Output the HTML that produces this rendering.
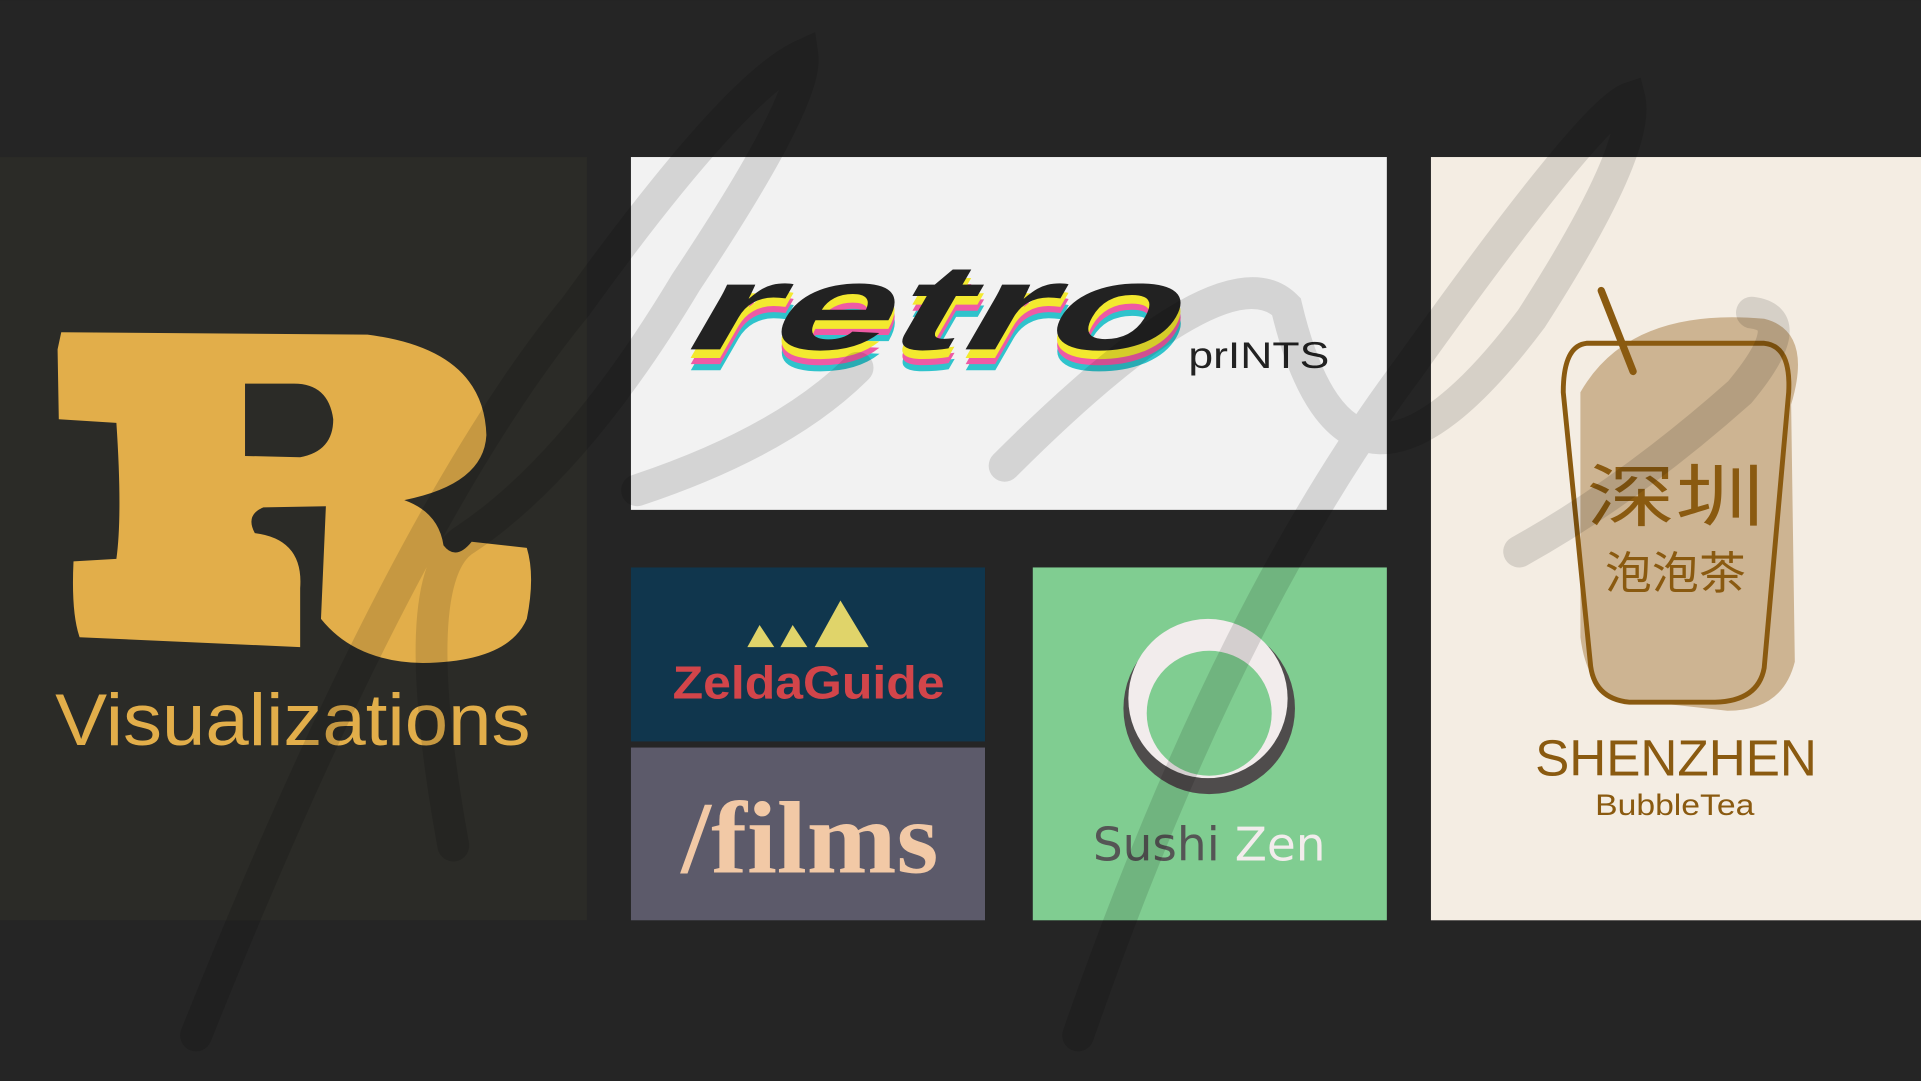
<!DOCTYPE html>
<html><head><meta charset="utf-8"><style>
html,body{margin:0;padding:0;background:#252525;overflow:hidden}
svg{display:block}
</style></head><body>
<svg width="1921" height="1081" viewBox="0 0 1568 882" xmlns="http://www.w3.org/2000/svg">
<rect width="1568" height="882" fill="#252525"/>
<rect x="0" y="128" width="479" height="623" fill="#2b2b27"/>
<path d="M50 271 L300 273 Q395 285 397 355 Q395 395 330 408 Q358 418 362 445 Q372 458 385 442 L430 447 Q437 470 430 505 Q415 540 345 541 Q290 540 262 505 L266 413 L215 414 Q200 420 208 435 Q248 440 245 480 L245 528 L65 520 Q58 500 60 458 L95 456 Q100 420 95 345 L48 342 L47 285 Z M200 313 L200 372 L245 373 Q272 368 272 342 Q268 313 240 313 Z" fill="#e2ae4a" fill-rule="evenodd"/>
<text x="45" y="608" font-family="Liberation Sans, sans-serif" font-size="60" fill="#e2ae4a" textLength="388" lengthAdjust="spacingAndGlyphs">Visualizations</text>
<rect x="515" y="128" width="617" height="288" fill="#f2f2f2"/>
<g font-family="Liberation Sans, sans-serif" font-weight="bold" font-size="100">
<text x="563" y="302" fill="#2fc3cc" transform="skewX(-30) translate(163 0)" textLength="400" lengthAdjust="spacingAndGlyphs">retro</text>
<text x="563" y="297" fill="#ee5aa5" transform="skewX(-30) translate(160 0)" textLength="400" lengthAdjust="spacingAndGlyphs">retro</text>
<text x="563" y="292" fill="#f3e92f" transform="skewX(-30) translate(157 0)" textLength="400" lengthAdjust="spacingAndGlyphs">retro</text>
<text x="563" y="285" fill="#222" transform="skewX(-30) translate(153 0)" textLength="400" lengthAdjust="spacingAndGlyphs">retro</text>
</g>
<text x="970" y="300" font-family="Liberation Sans, sans-serif" font-size="30" fill="#222" textLength="115" lengthAdjust="spacingAndGlyphs">prINTS</text>
<rect x="515" y="463" width="289" height="142" fill="#10364d"/>
<polygon points="610,528 620,510 632,528" fill="#e0d46a"/>
<polygon points="637,528 647,510 659,528" fill="#e0d46a"/>
<polygon points="665,528 686,490 709,528" fill="#e0d46a"/>
<text x="549" y="570" font-family="Liberation Sans, sans-serif" font-weight="bold" font-size="38" fill="#d2454a" textLength="222" lengthAdjust="spacingAndGlyphs">ZeldaGuide</text>
<rect x="515" y="610" width="289" height="141" fill="#5c5a6a"/>
<text x="556" y="712" font-family="Liberation Serif, serif" font-weight="bold" font-size="84" fill="#f2c9a6" textLength="210" lengthAdjust="spacingAndGlyphs">/films</text>
<rect x="843" y="463" width="289" height="288" fill="#80cd91"/>
<ellipse cx="987" cy="578" rx="70" ry="70" fill="#4f4c4c"/>
<ellipse cx="986" cy="570" rx="65" ry="65" fill="#f2ecec"/>
<ellipse cx="987" cy="582" rx="51" ry="51" fill="#80cd91"/>
<text x="892" y="702" font-family="DejaVu Sans, sans-serif" font-size="38" fill="#555" textLength="190" lengthAdjust="spacingAndGlyphs">Sushi <tspan fill="#f2ecec">Zen</tspan></text>
<rect x="1168" y="128" width="400" height="623" fill="#f4ede3"/>
<path d="M1290 320 Q1330 250 1440 260 Q1480 270 1462 330 L1465 540 Q1455 580 1410 580 L1320 570 Q1295 560 1290 520 Z" fill="#c9ad88" opacity="0.9"/>
<path d="M1295 280 L1440 280 Q1462 282 1460 320 L1440 545 Q1435 572 1400 573 L1330 573 Q1300 570 1298 540 L1276 320 Q1276 282 1295 280 Z" fill="none" stroke="#8a5a10" stroke-width="4"/>
<line x1="1307" y1="237" x2="1333" y2="303" stroke="#8a5a10" stroke-width="6" stroke-linecap="round"/>
<text x="1295" y="425" font-family="Liberation Sans, 'Noto Sans CJK SC', sans-serif" font-size="56" fill="#8a5a10" textLength="145" lengthAdjust="spacingAndGlyphs">深圳</text>
<text x="1310" y="480" font-family="Liberation Sans, 'Noto Sans CJK SC', sans-serif" font-size="36" fill="#8a5a10" textLength="115" lengthAdjust="spacingAndGlyphs">泡泡茶</text>
<text x="1253" y="633" font-family="Liberation Sans, sans-serif" font-size="42" fill="#8a5a10" textLength="230" lengthAdjust="spacingAndGlyphs">SHENZHEN</text>
<text x="1302" y="665" font-family="Liberation Sans, sans-serif" font-size="24" fill="#8a5a10" textLength="130" lengthAdjust="spacingAndGlyphs">BubbleTea</text>
<g fill="none" stroke="#000" stroke-opacity="0.12" stroke-width="26" stroke-linecap="round">
<path d="M160 845 Q330 420 470 250 Q600 70 655 45 Q660 80 560 230 Q470 380 380 440 Q330 470 370 690"/>
<path d="M520 400 Q640 360 700 300"/>
<path d="M880 845 Q1000 500 1150 300 Q1300 90 1330 80 Q1340 120 1250 260 Q1100 460 1050 250 Q1000 200 820 380"/>
<path d="M1240 450 Q1330 400 1420 320 Q1470 260 1430 255"/>
</g>
</svg>
</body></html>
